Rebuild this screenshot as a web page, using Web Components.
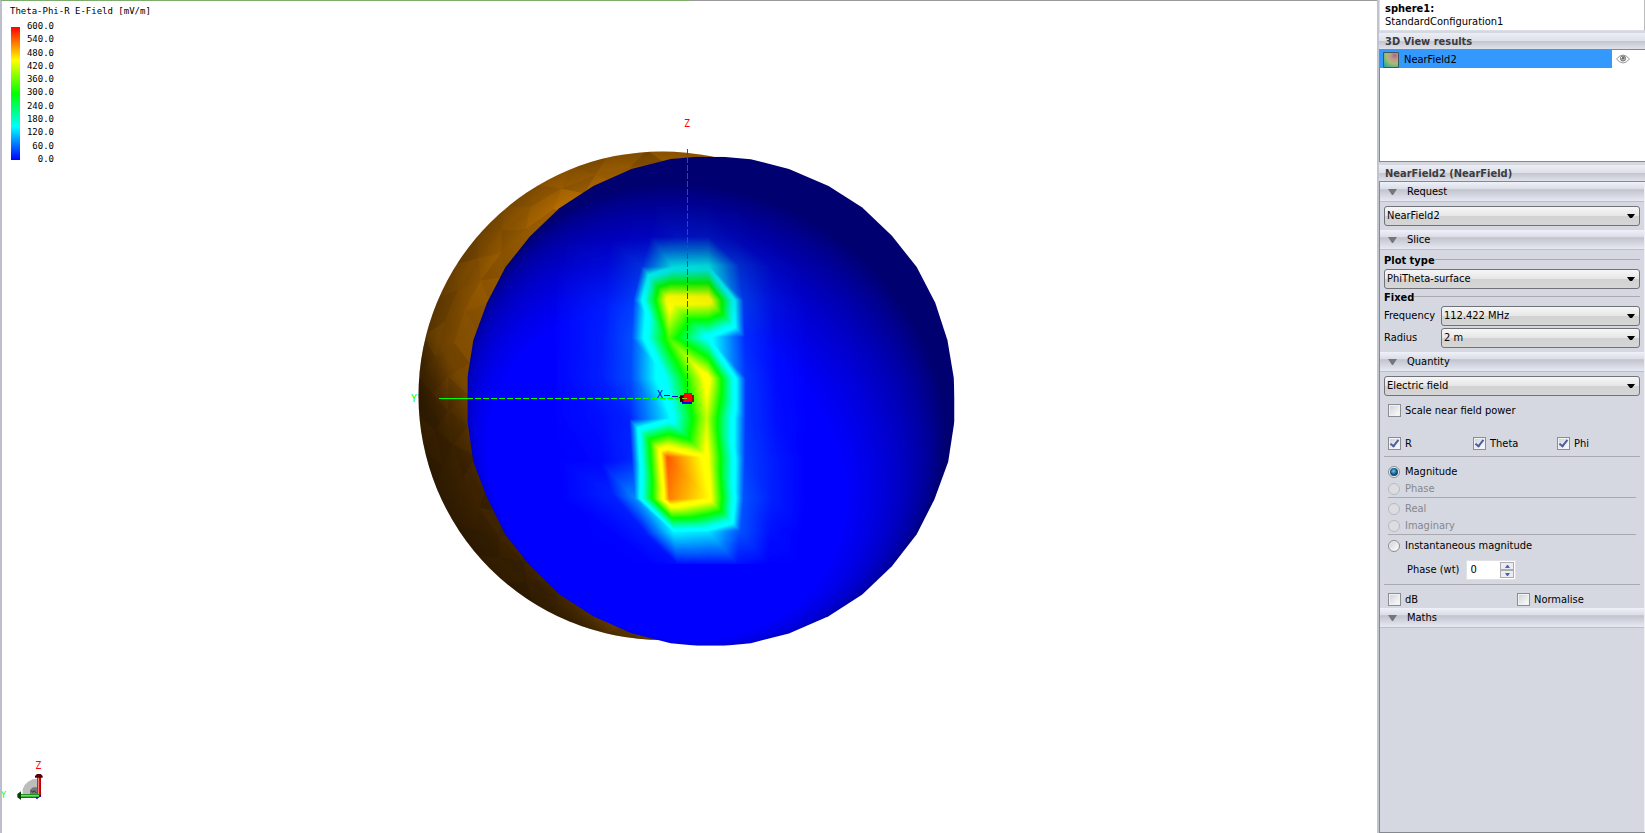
<!DOCTYPE html>
<html lang="en">
<head>
<meta charset="utf-8">
<title>3D near field view</title>
<style>
html,body{height:100%;margin:0}
body{font-family:"DejaVu Sans Condensed","DejaVu Sans",Tahoma,sans-serif;font-size:11px;line-height:14px;color:#000;background:#fff;overflow:hidden}
</style>
</head>
<body>
<near-field-app></near-field-app>
<script>
function define(name, html, setup){
  const t=document.createElement('template');
  t.innerHTML=html;
  customElements.define(name, class extends HTMLElement{
    constructor(){super();this.attachShadow({mode:'open'}).append(t.content.cloneNode(true));}
    connectedCallback(){if(setup&&!this.ready){this.ready=true;setup(this,this.shadowRoot);}}
  });
}
/* Colour scale: blue, cyan, green, yellow, red over 0..600 mV/m */
function fieldColour(v){
  const s=[[0,0,0,255],[135,0,255,255],[168,0,255,255],[300,0,255,0],[432,255,255,0],[465,255,255,0],[600,255,0,0]];
  for(let i=1;i<s.length;i++) if(v<=s[i][0]){
    const a=s[i-1],b=s[i],t=(v-a[0])/(b[0]-a[0]);
    return 'rgb('+[1,2,3].map(k=>Math.round(a[k]+(b[k]-a[k])*t)).join()+')';
  }
  return 'rgb(255,0,0)';
}
/* Part of a triangle whose value is at or above a level */
function clipAbove(tri,l){
  const out=[];
  tri.forEach((p,i)=>{
    const q=tri[(i+1)%3];
    if(p[2]>=l) out.push([p[0],p[1]]);
    if((p[2]>=l)!==(q[2]>=l)){const t=(l-p[2])/(q[2]-p[2]);out.push([p[0]+(q[0]-p[0])*t,p[1]+(q[1]-p[1])*t]);}
  });
  return out;
}
function fieldPaths(){
  const rows=[
   [[0,-60,0],[50,-50,0],[165,-50,0],[210,-50,0],[325,-50,0],[415,-50,0],[510,-50,0],[600,-50,0]],
   [[-120,50,0],[30,60,0],[150,50,2],[225,50,12],[325,50,14],[405,50,4],[505,60,0],[610,60,0]],
   [[-130,140,0],[20,140,6],[125,140,30],[220,140,136],[325,137,136],[418,135,30],[520,140,5],[620,140,0]],
   [[-130,240,2],[15,240,14],[100,240,32],[208,240,472],[325,240,468],[430,240,34],[520,240,10],[620,240,0]],
   [[-130,355,2],[5,355,16],[95,355,42],[207,355,340],[325,352,150],[434,350,24],[525,350,6],[625,350,0]],
   [[-130,475,3],[0,475,16],[92,475,40],[205,475,185],[322,475,462],[437,475,30],[530,475,6],[630,475,0]],
   [[-130,595,2],[0,595,8],[88,598,18],[207,595,130],[320,595,405],[437,595,30],[530,595,8],[630,595,0]],
   [[-130,715,0],[0,725,4],[95,715,20],[202,712,556],[320,712,455],[435,715,34],[525,725,14],[620,715,0]],
   [[-120,835,0],[35,820,18],[105,835,74],[208,837,535],[325,835,470],[430,835,44],[520,835,16],[620,835,0]],
   [[-90,940,0],[40,940,2],[138,942,14],[221,936,132],[325,936,122],[420,932,44],[515,935,8],[610,935,0]],
   [[-60,1030,0],[60,1030,0],[160,1030,2],[232,1032,8],[325,1032,10],[412,1032,10],[500,1030,2],[600,1030,0]]
  ];
  const tris=[];
  for(let r=0;r+1<rows.length;r++)for(let c=0;c+1<rows[r].length;c++){
    const a=rows[r][c],b=rows[r][c+1],d=rows[r+1][c],e=rows[r+1][c+1];
    tris.push([a,b,e],[a,e,d]);
  }
  let out='';
  for(let l=1;l<=560;l+=l<60?1:5){
    let d='';
    for(const t of tris){const p=clipAbove(t,l);if(p.length>2)d+='M'+p.map(q=>q[0].toFixed(1)+' '+q[1].toFixed(1)).join('L')+'Z';}
    if(d)out+=`<path d="${d}" fill="${fieldColour(l)}"/>`;
  }
  return out;
}
/* Diffuse lighting of the front sphere, as nested grey regions that multiply the field colours */
function lighting(){
  const cx=840,cy=815,rx=660,ry=686,amb=.44,k=.86;
  let L=[-.3,-.48,.9];const n=Math.hypot(...L);L=L.map(v=>v/n);
  let U=[L[2],0,-L[0]];const m=Math.hypot(...U);U=U.map(v=>v/m);
  const V=[L[1]*U[2]-L[2]*U[1],L[2]*U[0]-L[0]*U[2],L[0]*U[1]-L[1]*U[0]];
  const grey=g=>`rgb(${[0,0,0].map(()=>Math.round(g*255)).join()})`;
  let out=`<path d="M150 100H1520V1520H150Z" fill="${grey(amb)}"/>`;
  for(let i=1;i<=90;i++){
    const c=(i/90)*.65,s=Math.sqrt(1-c*c);let d='';
    for(let a=0;a<360;a+=3){
      const t=a*Math.PI/180,p=[0,1,2].map(j=>L[j]*c+s*(U[j]*Math.cos(t)+V[j]*Math.sin(t)));
      const h=p[2]<0?1.02/Math.hypot(p[0],p[1]):1;
      d+=(a?'L':'M')+(cx+rx*p[0]*h).toFixed(1)+' '+(cy-ry*p[1]*h).toFixed(1);
    }
    out+=`<path d="${d}Z" fill="${grey(Math.min(1,amb+k*c))}"/>`;
  }
  return out;
}
/* Flat-shaded triangles of the rear sphere */
function facets(){
  let out='',seed=7;
  const rnd=()=>(seed=(seed*16807)%2147483647)/2147483647;
  const rad=[690,648,610,560,500,430];
  const pt=(i,k)=>{const a=(85+(k+(i%2)/2)*9)*Math.PI/180;return [(712+rad[i]*.97*Math.cos(a)+(i*4)).toFixed(0),(800-rad[i]*Math.sin(a)).toFixed(0)];};
  for(let i=0;i+1<rad.length;i++)for(let k=0;k<22;k++){
    const s=i%2, a=pt(i,k),b=pt(i,k+1),c=pt(i+1,k+s),d=pt(i+1,k+1+s);
    [[a,b,c],[b,c,d]].forEach(t=>{out+=`<path d="M${t.map(p=>p.join(' ')).join('L')}Z" fill="#000" fill-opacity="${(rnd()*.17).toFixed(2)}"/>`;});
  }
  return out;
}

define('colour-legend',`<style>
:host{display:block;font:9px/12px "DejaVu Sans Mono",monospace}
h2{font:inherit;margin:0 0 3px;white-space:pre}
.scale{display:flex;height:145px}
.bar{width:9px;margin:7px 0 5px 1px;background:linear-gradient(#f00,#ff0 25%,#0f0 50%,#0ff 75%,#00f)}
ol{list-style:none;margin:0;padding:0;width:34px;display:flex;flex-direction:column;justify-content:space-between;text-align:right}
</style><h2>Theta-Phi-R E-Field [mV/m]</h2><div class="scale"><div class="bar"></div><ol></ol></div>`,(h,r)=>{
  const ol=r.querySelector('ol');
  for(let v=600;v>=0;v-=60){const li=document.createElement('li');li.textContent=v.toFixed(1);ol.append(li);}
});

define('axis-triad',`<style>:host{display:block;width:60px;height:93px}svg{display:block;font-family:"DejaVu Sans Mono",monospace}</style>
<svg width="60" height="93" viewBox="0 0 180 279">
<defs><linearGradient id="r" x1="0" x2="1" y1="0" y2="0"><stop stop-color="#a00"/><stop offset=".4" stop-color="#f88"/><stop offset=".6" stop-color="#f00"/><stop offset="1" stop-color="#900"/></linearGradient>
<linearGradient id="g" x1="0" x2="0" y1="0" y2="1"><stop stop-color="#060"/><stop offset=".4" stop-color="#6e6"/><stop offset="1" stop-color="#050"/></linearGradient></defs>
<path d="M68 162V148L74 135L84 125L98 118L112 117V162Z" fill="#bdbdbd"/><path d="M90 162V150L99 142H112V162Z" fill="#777"/><path d="M93 152l6 5 4-5 6 7" stroke="#334" stroke-width="3" fill="none"/>
<rect x="111" y="110" width="12" height="60" fill="url(#r)"/><path d="M105 113V108L111 102H122L128 108V113Z" fill="#500"/>
<rect x="60" y="162" width="58" height="12" fill="url(#g)"/><path d="M63 154V180L52 172V162Z" fill="#040"/><path d="M108 174h6M117 168h6" stroke="#00d" stroke-width="4"/>
<text x="106" y="87" font-size="30" fill="#f00">Z</text><text x="2" y="173" font-size="27" fill="#0f0">Y</text></svg>`);

define('scene-view',`<style>:host{display:block;width:100%;height:100%}svg{display:block;width:100%;height:100%;font-family:"DejaVu Sans Mono",monospace;font-size:10px}.light{mix-blend-mode:multiply}.ball{isolation:isolate}</style>
<svg viewBox="0 0 1375 832" role="img" aria-label="Near field on a sphere surface">
<defs>
<linearGradient id="brown" gradientUnits="userSpaceOnUse" x1="50" y1="795" x2="784" y2="354"><stop stop-color="#402500"/><stop offset=".06" stop-color="#523000"/><stop offset=".14" stop-color="#7c4a00"/><stop offset=".38" stop-color="#965900"/><stop offset=".5" stop-color="#a66400"/><stop offset=".68" stop-color="#bb7000"/><stop offset=".8" stop-color="#b86e00"/><stop offset="1" stop-color="#ae6800"/></linearGradient>
<radialGradient id="edge" gradientUnits="userSpaceOnUse" cx="730" cy="800" r="700"><stop offset=".86" stop-color="#000" stop-opacity="0"/><stop offset="1" stop-color="#000" stop-opacity=".26"/></radialGradient>
<clipPath id="ball"><path d="M731 137L803 131H870L947 138L1050 165L1157 213L1248 273L1328 352L1395 440L1445 540L1478 645L1495 750L1497 808V870L1480 985L1443 1090L1395 1188L1328 1278L1248 1357L1157 1418L1050 1466L947 1493L875 1500H803L731 1493L625 1465L522 1418L430 1356L350 1275L285 1190L235 1085L198 985L182 870V750L198 645L235 540L285 440L350 355L430 275L522 213L625 165Z"/></clipPath>
<clipPath id="back"><ellipse cx="708" cy="800" rx="658" ry="684"/></clipPath>
</defs>
<g transform="translate(398 109) scale(.3704 .3571)">
<g clip-path="url(#back)"><path d="M0 100H900V1500H0Z" fill="url(#brown)"/><path d="M0 100H900V1500H0Z" fill="url(#edge)"/><g id="facets"></g></g>
<g clip-path="url(#ball)" class="ball"><path d="M150 100H1520V1520H150Z" fill="#00f"/>
<g transform="translate(540 308) scale(.9 .9334)" id="field"></g>
<g class="light" id="light"></g></g>
</g>
<g shape-rendering="crispEdges" fill="none">
<path d="M685.500 148V392" stroke="#f00" stroke-dasharray="6 2"/>
<path d="M437 397.500H465" stroke="#0f0"/><path d="M465 397.500H680" stroke="#0f0" stroke-dasharray="6 2"/>
<path d="M662 394.500H668M670 395.500H676M677 396.500H680" stroke="#00c"/>
<path d="M678 394H692V401H678Z" fill="#a00"/><path d="M682 392H690V401H682Z" fill="#f00"/><path d="M680 401H690V403H680Z" fill="#00e"/><path d="M678 395H681V401H678Z" fill="#400"/><path d="M680 397.500H685" stroke="#8c0"/>
</g>
<text x="682" y="126" fill="#f00">Z</text><text x="409" y="401" fill="#0f0">Y</text><text x="655" y="397" fill="#00c">X</text>
</svg>`,(h,r)=>{
  r.querySelector('#field').innerHTML=fieldPaths();
  r.querySelector('#light').innerHTML=lighting();
  r.querySelector('#facets').innerHTML=facets();
});

define('view-panel',`<style>
:host{display:block;position:relative;min-width:0;border-left:2px solid #bcbfcb;border-top:1px solid #999;background:#fff;box-sizing:border-box}
:host::before{content:"";position:absolute;left:0;top:-1px;width:50%;height:1px;background:#7dad6d}
scene-view{position:absolute;inset:0}
colour-legend{position:absolute;left:8px;top:4px}
axis-triad{position:absolute;left:-2px;bottom:0}
</style><scene-view></scene-view><colour-legend></colour-legend><axis-triad></axis-triad>`);

define('panel-title',`<style>
:host{display:block}
h2{font:inherit;font-weight:bold;color:#3c3c40;margin:0;padding:0 6px;height:16px;line-height:17px;background:linear-gradient(#eceef5,#dfe1e9 48%,#c2c5ce 50%,#dfe2ea)}
</style><h2><slot></slot></h2>`);

define('side-section',`<style>
:host{display:block}
button{all:unset;box-sizing:border-box;display:flex;align-items:center;width:100%;height:20px;padding:1px 0 0 8px;gap:10px;border-bottom:1px solid #bbbec6;background:linear-gradient(#eff1f9,#d9dce5 38%,#c1c4cd 40%,#e6e9f3)}
svg{width:9px;height:6px}
</style><button type="button" aria-expanded="true"><svg viewBox="0 0 9 6"><path d="M0 0H9L5 6H4Z" fill="#74767a"/></svg><slot name="title"></slot></button><slot></slot>`,(h,r)=>{
  const b=r.querySelector('button'),s=r.querySelector('slot:not([name])');
  b.onclick=()=>{const open=b.getAttribute('aria-expanded')!=='true';b.setAttribute('aria-expanded',open);s.style.display=open?'':'none';};
});

define('combo-box',`<style>
:host{display:flex;align-items:center;height:20px}
label{width:57px;flex:none}
label:empty{display:none}
.box{position:relative;flex:1;height:20px}
select{appearance:none;box-sizing:border-box;display:block;width:100%;height:20px;margin:0;padding:0 20px 0 2px;font:inherit;color:#000;border:1px solid #707277;border-radius:3px;background:linear-gradient(#f6f6f6,#e6e6e6 50%,#d2d2d2 52%,#d6d6d6)}
svg{position:absolute;right:5px;top:8px;width:8px;height:4px;pointer-events:none}
</style><label for="s"></label><div class="box"><select id="s"><option></option></select><svg viewBox="0 0 8 4"><path d="M0 0H8L5 4H3Z"/></svg></div>`,(h,r)=>{
  r.querySelector('label').textContent=h.getAttribute('label')||'';
  r.querySelector('select').setAttribute('aria-label',h.getAttribute('label')||h.getAttribute('name'));
  r.querySelector('option').textContent=h.getAttribute('value');
});

define('group-heading',`<style>
:host{display:flex;align-items:center;height:14px;line-height:16px;font-weight:bold}
:host::after{content:"";flex:1;height:1px;background:#a8aab0;margin-bottom:3px}
</style><slot></slot>`);

define('result-list',`<style>
:host{display:block;height:111px;background:#fff;border-top:1px solid #85888f;border-bottom:1px solid #85888f}
ul{margin:0;padding:0;list-style:none}
li{display:flex;height:18px;align-items:center}
.name{all:unset;box-sizing:border-box;display:flex;align-items:center;gap:5px;flex:1;height:18px;padding:1px 0 0 3px;background:#39f}
.eye{all:unset;display:flex;width:33px;height:18px;align-items:center;padding-left:4px;box-sizing:border-box}
</style><ul><li><button class="name" type="button"><svg width="16" height="16" viewBox="0 0 16 16"><defs><radialGradient id="a" cx=".75" cy=".2" r="1"><stop stop-color="#b0648a"/><stop offset=".28" stop-color="#c09a8a"/><stop offset=".55" stop-color="#a9bb78"/><stop offset=".8" stop-color="#5fae84"/><stop offset="1" stop-color="#2a9fa0"/></radialGradient></defs><path d="M.5 .5H15.500V15.500H.5Z" fill="url(#a)" stroke="#3c5a58"/></svg>NearField2</button><button class="eye" type="button" aria-label="Show result"><svg width="14" height="10" viewBox="0 0 14 10" fill="none" stroke="#999"><path d="M.5 5Q4 1 7 1T13.500 5Q10 9 7 9T.5 5Z"/><circle cx="7" cy="4.500" r="2.600" fill="#aaa" stroke="#777"/><path d="M7 3v2" stroke="#333"/><path d="M5 3l1 1" stroke="#fff"/></svg></button></li></ul>`);

define('field-properties',`<style>
:host{display:block}
.pad{padding:4px}
.quantity{padding-bottom:0}
.lines{display:grid;gap:2px}
.slice{padding:4px;display:grid}
.slice group-heading{margin-bottom:1px}
.slice .fixed{margin-top:2px}
.opt{display:flex;align-items:center;gap:4px;height:17px}
.scaled{margin-top:6px}
.off{color:#85878c}
input[type=checkbox],input[type=radio]{appearance:none;box-sizing:border-box;margin:0;width:13px;height:13px;flex:none;border:1px solid #8b8d92;background:linear-gradient(135deg,#ccd0d5,#f6f6f6 80%);box-shadow:inset 0 0 0 1px #f1f2f4;display:grid;place-items:center}
input[type=radio]{width:12px;height:12px;margin-right:1px;border-radius:50%}
.off input{border-color:#b8babf!important;background:#dcdde1!important;box-shadow:none!important}
input[type=checkbox]:checked::before{content:"";width:3px;height:7px;border:solid #4a5f9e;border-width:0 2px 2px 0;rotate:38deg;margin-bottom:2px}
input[type=radio]:checked::before{content:"";width:8px;height:8px;border-radius:50%;background:radial-gradient(circle at 45% 40%,#7cc8ee,#125d90 45%,#082c48)}
.inner{padding:0 4px;display:grid}
.three{display:grid;grid-template-columns:85px 84px 1fr;margin-top:16px}
.two{grid-template-columns:129px 1fr;margin-top:6px}
hr{border:0;height:1px;margin:0;background:#a8aab0;width:100%}
.components{margin-top:4px}
.modes{padding:6px 4px 4px}
.modes hr{margin:0 0 2px}
.phase{display:flex;align-items:center;gap:7px;margin:6px 0 0;padding-left:19px;height:20px}
.spin{display:flex;background:#fff;height:18px;border:1px solid #dfe1e6;box-sizing:content-box;padding-right:1px}
.spin input{width:33px;border:0;padding:0 0 0 3px;box-sizing:border-box;margin:0;font:inherit;background:none;appearance:textfield;outline:0}
.spin input::-webkit-inner-spin-button{display:none}
.spin div{display:grid;grid-template-rows:8px 8px;padding:1px 0}
.spin button{margin:0;padding:0;width:14px;height:8px;border:1px solid #abadb3;background:#ececf0;display:grid;place-items:center}
.spin svg{display:block;width:5px;height:3px}
</style>
<side-section><span slot="title">Request</span><div class="pad"><combo-box name="Request" value="NearField2"></combo-box></div></side-section>
<side-section><span slot="title">Slice</span><div class="slice"><group-heading>Plot type</group-heading><combo-box name="Plot type" value="PhiTheta-surface"></combo-box><group-heading class="fixed">Fixed</group-heading><div class="lines"><combo-box label="Frequency" value="112.422 MHz"></combo-box><combo-box label="Radius" value="2 m"></combo-box></div></div></side-section>
<side-section><span slot="title">Quantity</span><div class="pad quantity"><combo-box name="Quantity" value="Electric field"></combo-box>
<div class="inner"><label class="opt scaled"><input type="checkbox">Scale near field power</label>
<div class="three"><label class="opt"><input type="checkbox" checked>R</label><label class="opt"><input type="checkbox" checked>Theta</label><label class="opt"><input type="checkbox" checked>Phi</label></div></div>
<hr class="components">
<div class="inner modes"><label class="opt"><input type="radio" name="mode" checked>Magnitude</label><label class="opt off"><input type="radio" name="mode" disabled>Phase</label><hr>
<label class="opt off"><input type="radio" name="mode" disabled>Real</label><label class="opt off"><input type="radio" name="mode" disabled>Imaginary</label><hr>
<label class="opt"><input type="radio" name="mode">Instantaneous magnitude</label>
<div class="phase"><label for="wt">Phase (wt)</label><span class="spin"><input id="wt" type="number" value="0"><div><button type="button" aria-label="Increase"><svg viewBox="0 0 5 3"><path d="M0 3L2 0H3L5 3Z" fill="#4c62b0"/></svg></button><button type="button" aria-label="Decrease"><svg viewBox="0 0 5 3"><path d="M0 0L2 3H3L5 0Z" fill="#4c62b0"/></svg></button></div></span></div></div>
<hr><div class="inner two"><label class="opt"><input type="checkbox">dB</label><label class="opt"><input type="checkbox">Normalise</label></div></div></side-section>
<side-section><span slot="title">Maths</span></side-section>`,(h,r)=>{
  const i=r.querySelector('#wt'),[up,down]=r.querySelectorAll('.spin button');
  up.onclick=()=>i.stepUp();down.onclick=()=>i.stepDown();
});

define('side-panel',`<style>
:host{display:flex;flex-direction:column;min-height:0;background:#d5d8e0;border-left:2px solid #c0c3d0;box-sizing:border-box}
header{background:#fff;height:31px;padding:2px 5px 0;box-sizing:border-box;border-left:1px solid #dcdee5;border-bottom:1px solid #dcdee5;border-right:1px solid #bbb;line-height:13px}
header b{display:block}
panel-title{margin-top:2px}
result-list{border-left:1px solid #85888f}
.second{margin-top:3px}
field-properties{flex:1;border:solid #85888f;border-width:1px 0 1px 1px;box-shadow:inset -1px 0 #eef0f5;padding-right:1px}
</style><header><b>sphere1:</b>StandardConfiguration1</header><panel-title>3D View results</panel-title><result-list></result-list><panel-title class="second">NearField2 (NearField)</panel-title><field-properties></field-properties>`);

define('near-field-app',`<style>:host{display:grid;grid-template-columns:minmax(0,1fr) 268px;height:100vh}</style><view-panel></view-panel><side-panel></side-panel>`);
</script>
</body>
</html>
